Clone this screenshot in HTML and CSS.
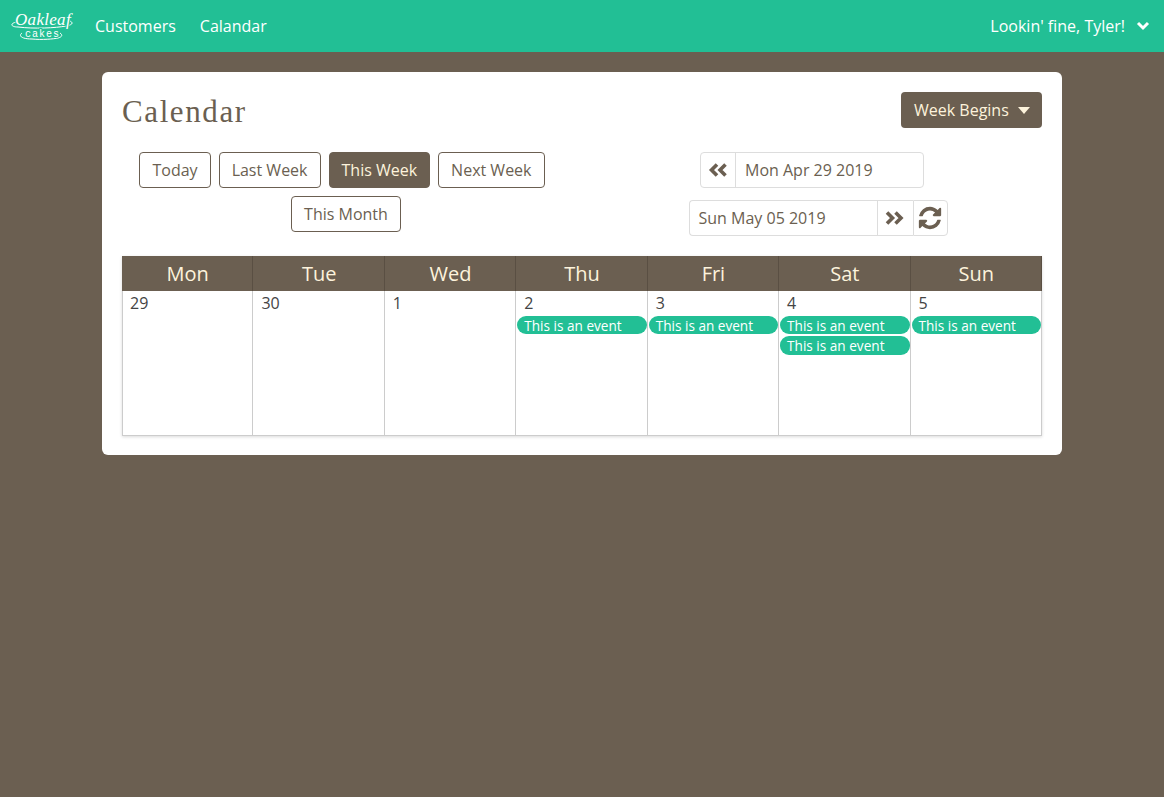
FILE: index.html
```html
<!DOCTYPE html>
<html lang="en">
<head>
    <meta charset="UTF-8">
    <meta name="viewport" content="width=device-width, initial-scale=1.0">
    <title>Calendar</title>
    <link rel="stylesheet" href="styles.css">
</head>
<body>
    <nav class="navbar">
        <svg class="logo" viewBox="0 0 64 30" width="64" height="30">
            <path class="logo-line" d="M7 11C0 12 0 16 8 16C24 18 46 17 56 15C62 14 64 12 60 10"/>
            <path class="logo-line" d="M12 22C8 25 12 28 22 28C32 29 44 28 48 27C52 26 53 24 50 22"/>
            <text class="logo-top" x="5" y="14">Oakleaf</text>
            <text class="logo-bottom" x="15" y="26">cakes</text>
        </svg>
        <a class="nav-link" href="#">Customers</a>
        <a class="nav-link" href="#">Calandar</a>
        <div class="nav-user">
            <span>Lookin' fine, Tyler!</span>
            <svg class="nav-chevron" viewBox="0 0 14 10" width="14" height="10"><polyline points="2,2 7,7 12,2"/></svg>
        </div>
    </nav>

    <main class="card">
        <div class="card-head">
            <h1>Calendar</h1>
            <button class="dropdown-btn">Week Begins <span class="caret"></span></button>
        </div>

        <div class="controls">
            <div class="controls-col">
                <div class="btn-row btn-row-first">
                    <button class="btn">Today</button>
                    <button class="btn">Last Week</button>
                    <button class="btn active">This Week</button>
                    <button class="btn">Next Week</button>
                </div>
                <div class="btn-row">
                    <button class="btn">This Month</button>
                </div>
            </div>
            <div class="controls-col">
                <div class="date-row date-row-first">
                    <div class="date-group">
                        <span class="date-icon">
                            <svg viewBox="0 0 20 16" width="20" height="16"><polyline points="9,2.5 3.5,8 9,13.5"/><polyline points="17.5,2.5 12,8 17.5,13.5"/></svg>
                        </span>
                        <span class="date-value">Mon Apr 29 2019</span>
                    </div>
                </div>
                <div class="date-row">
                    <div class="date-group date-group-end">
                        <span class="date-value">Sun May 05 2019</span>
                        <span class="date-icon date-icon-end">
                            <svg viewBox="0 0 20 16" width="20" height="16"><polyline points="2,2.5 7.5,8 2,13.5"/><polyline points="10.5,2.5 16,8 10.5,13.5"/></svg>
                        </span>
                    </div>
                    <button class="refresh">
                        <svg viewBox="0 0 1792 1792" width="26" height="26"><path d="M1639 1056q0 5-1 7-64 268-268 434.5t-478 166.5q-146 0-282.5-55t-243.5-157l-129 129q-19 19-45 19t-45-19-19-45v-448q0-26 19-45t45-19h448q26 0 45 19t19 45-19 45l-137 137q71 66 161 102t187 36q134 0 250-65t186-179q11-17 53-117 8-23 30-23h192q13 0 22.5 9.5t9.5 22.5zm25-800v448q0 26-19 45t-45 19h-448q-26 0-45-19t-19-45 19-45l138-138q-148-137-349-137-134 0-250 65t-186 179q-11 17-53 117-8 23-30 23h-199q-13 0-22.5-9.5t-9.5-22.5v-7q65-268 270-434.5t480-166.5q146 0 284 55.5t245 156.5l130-129q19-19 45-19t45 19 19 45z"/></svg>
                    </button>
                </div>
            </div>
        </div>

        <table class="calendar">
            <thead>
                <tr>
                    <th>Mon</th>
                    <th>Tue</th>
                    <th>Wed</th>
                    <th>Thu</th>
                    <th>Fri</th>
                    <th>Sat</th>
                    <th>Sun</th>
                </tr>
            </thead>
            <tbody>
                <tr>
                    <td><div class="day">29</div></td>
                    <td><div class="day">30</div></td>
                    <td><div class="day">1</div></td>
                    <td><div class="day">2</div><div class="event">This is an event</div></td>
                    <td><div class="day">3</div><div class="event">This is an event</div></td>
                    <td><div class="day">4</div><div class="event">This is an event</div><div class="event">This is an event</div></td>
                    <td><div class="day">5</div><div class="event">This is an event</div></td>
                </tr>
            </tbody>
        </table>
    </main>
</body>
</html>
```

FILE: styles.css
```css
* { box-sizing: border-box; }
body {
    margin: 0;
    min-height: 797px;
    background: #6b5f51;
    font-family: "Open Sans", Arial, sans-serif;
    font-size: 16px;
    color: #6b5f51;
}

.navbar {
    display: flex;
    align-items: center;
    height: 52px;
    padding: 0 14px 0 10px;
    background: #22bf95;
    color: #fff;
}
.logo { margin-right: 21px; flex: none; }
.logo-line { fill: none; stroke: #fff; stroke-width: 1; }
.logo-top { font-family: "Liberation Serif", serif; font-style: italic; font-size: 17px; fill: #fff; letter-spacing: 0.3px; stroke: #22bf95; stroke-width: 2px; paint-order: stroke; }
.logo-bottom { font-family: "Liberation Mono", monospace; font-size: 10px; fill: #fff; letter-spacing: 1px; stroke: #22bf95; stroke-width: 2px; paint-order: stroke; }
.nav-link { color: #fff; text-decoration: none; margin-right: 24px; }
.nav-user { margin-left: auto; display: flex; align-items: center; gap: 11px; }
.nav-chevron { fill: none; stroke: #fff; stroke-width: 3; }

.card {
    width: 960px;
    height: 383px;
    margin: 20px auto 0 102px;
    padding: 20px;
    background: #fff;
    border-radius: 6px;
}
.card-head { display: flex; justify-content: space-between; align-items: flex-start; height: 60px; }
h1 {
    margin: 0;
    padding-top: 2px;
    font-family: "Liberation Serif", serif;
    font-weight: normal;
    font-size: 31px;
    line-height: 36px;
    letter-spacing: 1.6px;
}
.dropdown-btn {
    display: flex;
    align-items: center;
    gap: 8px;
    height: 36px;
    width: 141px;
    padding: 0 11px 0 13px;
    border: none;
    border-radius: 4px;
    background: #6b5f51;
    color: #fdf3dc;
    font: inherit;
}
.caret { width: 0; height: 0; margin-left: 1px; border: 6.5px solid transparent; border-top: 7px solid #fdf3dc; border-bottom: 0; }

.controls { display: flex; gap: 24px; height: 104px; }
.controls-col { width: 448px; }

.btn-row { display: flex; justify-content: center; gap: 8px; margin-bottom: 8px; }
.btn-row-first { padding-right: 8px; }
.btn {
    height: 36px;
    padding: 0 12px;
    border: 1px solid #6b5f51;
    border-radius: 4px;
    background: #fff;
    color: #6b5f51;
    font: inherit;
}
.btn.active { background: #6b5f51; color: #fdf3dc; }

.date-row { display: flex; justify-content: center; margin-bottom: 12px; }
.date-row-first { padding-right: 12px; }
.date-group {
    display: flex;
    width: 224px;
    height: 36px;
    border: 1px solid #ddd;
    border-radius: 4px;
}
.date-group-end { border-right: 0; border-radius: 4px 0 0 4px; }
.date-icon { display: flex; align-items: center; justify-content: center; flex: none; width: 35px; border-right: 1px solid #ddd; }
.date-icon-end { width: 36px; border-right: 0; border-left: 1px solid #ddd; }
.date-icon svg { fill: none; stroke: #6b5f51; stroke-width: 3.6; }
.date-value { flex: 1; padding-left: 9px; line-height: 34px; }
.refresh {
    display: flex;
    align-items: center;
    justify-content: center;
    width: 35px;
    height: 36px;
    padding: 0;
    border: 1px solid #ddd;
    border-radius: 0 4px 4px 0;
    background: #fff;
}
.refresh svg { fill: #6b5f51; }

.calendar {
    width: 920px;
    table-layout: fixed;
    border-collapse: separate;
    border-spacing: 0;
    box-shadow: 0 1px 3px rgba(0, 0, 0, 0.15);
}
.calendar th {
    height: 35px;
    padding: 0 0 0 1px;
    background: #6b5f51;
    border-right: 1px solid #5a4f43;
    color: #fdf3dc;
    font-size: 20px;
    font-weight: normal;
}
.calendar td {
    height: 145px;
    padding: 0 0 0 1px;
    vertical-align: top;
    border-right: 1px solid #ccc;
    border-bottom: 1px solid #ccc;
    color: #444;
}
.calendar td:first-child { padding-left: 0; border-left: 1px solid #ccc; }
.day { padding: 1px 7px 0; line-height: 23px; height: 25px; }
.event {
    height: 18.4px;
    margin-bottom: 2px;
    padding-left: 7px;
    border-radius: 9px;
    background: #22bf95;
    color: #fff;
    font-size: 13.6px;
    line-height: 19px;
}
```
